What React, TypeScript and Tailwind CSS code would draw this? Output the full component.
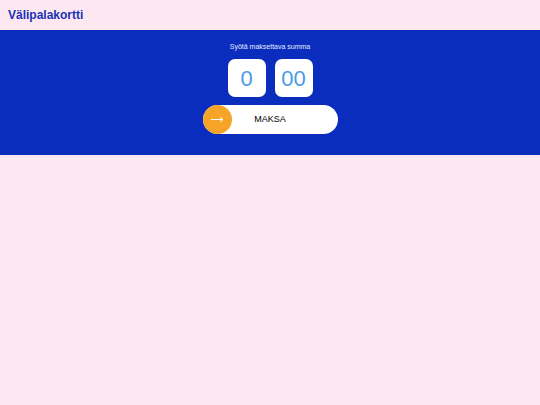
export default function App() {
  return (
    <div className="min-h-[405px] bg-[#fde8f1] font-['Liberation_Sans',Arial,sans-serif]">
      <header className="flex h-[30px] items-center px-[8px]">
        <h1 className="text-[12px] font-bold text-[#1a32b5]">Välipalakortti</h1>
      </header>
      <section className="flex h-[125px] flex-col items-center bg-[#0a2dbe] pt-[12px]">
        <p className="text-[7px] leading-[9px] text-[#e8ecff]">Syötä maksettava summa</p>
        <div className="mt-[8px] flex gap-[9px]">
          <div className="flex h-[38px] w-[38px] items-center justify-center rounded-[7px] bg-white text-[22px] text-[#4a9be6]">
            0
          </div>
          <div className="flex h-[38px] w-[38px] items-center justify-center rounded-[7px] bg-white text-[22px] text-[#4a9be6]">
            00
          </div>
        </div>
        <button className="relative mt-[8px] flex h-[29px] w-[135px] items-center rounded-full bg-white">
          <span className="absolute left-0 top-0 flex h-[29px] w-[29px] items-center justify-center rounded-full bg-[#f5a427]">
            <svg width="13" height="7" viewBox="0 0 13 7" fill="none" stroke="white" strokeWidth="1">
              <path d="M0 3.5h12M9 1l3 2.5L9 6" />
            </svg>
          </span>
          <span className="flex-1 text-center text-[9px] text-black">MAKSA</span>
        </button>
      </section>
    </div>
  );
}
